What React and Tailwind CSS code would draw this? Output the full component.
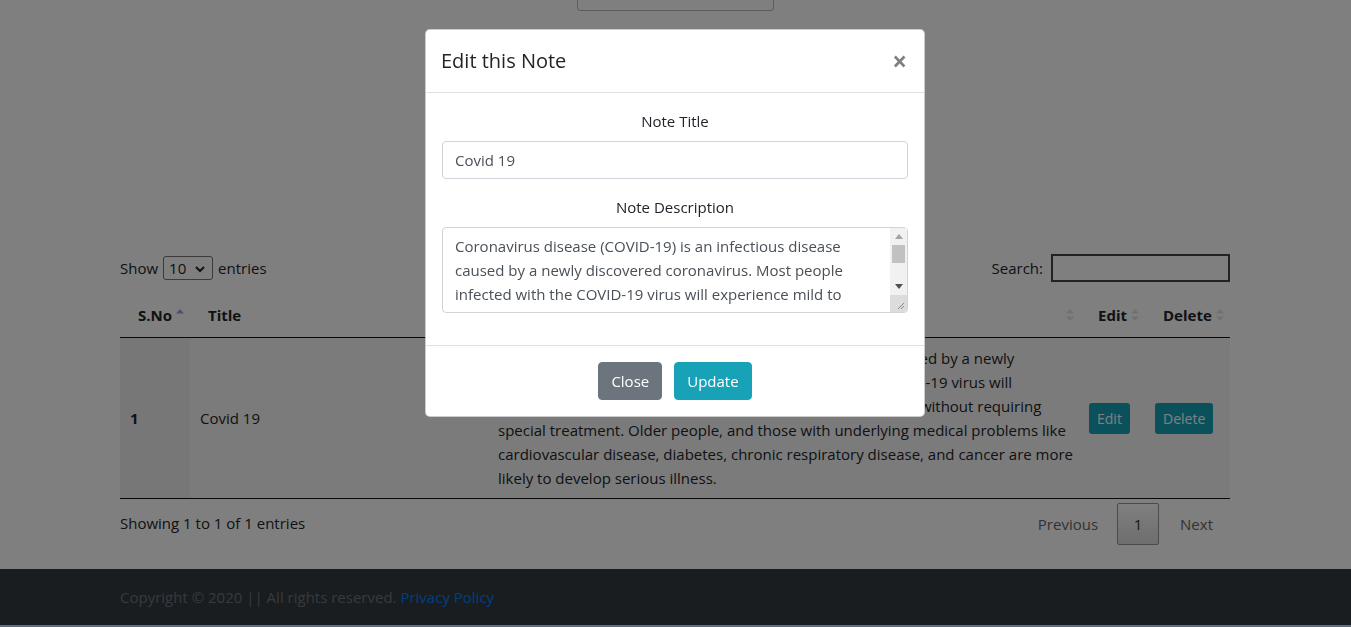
import React from "react";

const DESC_LINES = [
  "Coronavirus disease (COVID-19) is an infectious disease caused by a newly",
  "discovered coronavirus. Most people infected with the COVID-19 virus will",
  "experience mild to moderate respiratory illness and recover without requiring",
  "special treatment. Older people, and those with underlying medical problems like",
  "cardiovascular disease, diabetes, chronic respiratory disease, and cancer are more",
  "likely to develop serious illness.",
];

const DESC = DESC_LINES.join(" ");

function SortIcon({ asc }) {
  return (
    <svg width="8" height="14" viewBox="0 0 8 14" className="shrink-0">
      {asc ? (
        <path d="M0 5.5 L4 1 L8 5.5Z" fill="#9c9cec" />
      ) : (
        <path d="M0 5.5 L4 1 L8 5.5Z M0 8.5 L4 13 L8 8.5Z" fill="#e2e2e2" />
      )}
    </svg>
  );
}

function Th({ children, asc, className = "" }) {
  return (
    <th className={"py-[10px] pl-[18px] pr-[6px] text-left font-bold border-b border-[#111] " + className}>
      <div className="flex items-center justify-between">
        <span>{children}</span>
        <SortIcon asc={asc} />
      </div>
    </th>
  );
}

export default function App() {
  return (
    <div className="relative min-h-[627px] bg-white text-[#212529] font-['Open_Sans','Noto_Sans',sans-serif] text-[15px] leading-6 overflow-hidden">
      {/* top stub of a centered button */}
      <div className="flex justify-center pr-px">
        <div className="w-[197px] h-[11px] border-x border-b border-[#bcbcbc] rounded-b-[4px] bg-white" />
      </div>

      {/* data table */}
      <div className="flex justify-center pr-px mt-[243px]">
        <div className="w-[1110px]">
          <div className="flex items-center justify-between h-[28px]">
            <div className="flex items-center gap-[5px]">
              <span>Show</span>
              <div className="relative w-[50px] h-[24px] border border-[#767676] rounded-[3px] bg-white flex items-center pl-[5px]">
                <span>10</span>
                <svg width="10" height="7" viewBox="0 0 10 7" className="absolute right-[7px] top-[9px]">
                  <path d="M1 1 L5 5 L9 1" stroke="#222" strokeWidth="2" fill="none" />
                </svg>
              </div>
              <span>entries</span>
            </div>
            <div className="flex items-center gap-[8px]">
              <span>Search:</span>
              <div className="w-[179px] h-[28px] border-2 border-[#444] bg-white" />
            </div>
          </div>

          <table className="w-full table-fixed border-collapse mt-[11px]">
            <colgroup>
              <col className="w-[70px]" />
              <col className="w-[298px]" />
              <col className="w-[592px]" />
              <col className="w-[65px]" />
              <col className="w-[85px]" />
            </colgroup>
            <thead>
              <tr>
                <Th asc>S.No</Th>
                <Th>Title</Th>
                <Th>Description</Th>
                <Th>Edit</Th>
                <Th>Delete</Th>
              </tr>
            </thead>
            <tbody>
              <tr className="bg-[#f7f7f7] border-b border-[#111]">
                <td className="bg-[#eeeeee] px-[10px] py-[8px] font-bold align-middle">1</td>
                <td className="px-[10px] py-[8px] align-middle">Covid 19</td>
                <td className="px-[10px] py-[8px] align-middle">
                  {DESC_LINES.map((l, i) => (
                    <div key={i} className="whitespace-nowrap">{l}</div>
                  ))}
                </td>
                <td className="px-[9px] py-[8px] align-middle">
                  <button className="bg-[#17a2b8] text-white text-[14px] leading-[21px] px-[8px] py-[5px] rounded-[3px]">Edit</button>
                </td>
                <td className="px-[10px] py-[8px] align-middle">
                  <button className="bg-[#17a2b8] text-white text-[14px] leading-[21px] px-[8px] py-[5px] rounded-[3px]">Delete</button>
                </td>
              </tr>
            </tbody>
          </table>

          <div className="flex items-start justify-between mt-[4px]">
            <div className="pt-[8px]">Showing 1 to 1 of 1 entries</div>
            <div className="flex items-center">
              <span className="px-[16px] py-[8px] text-[#666] border border-transparent">Previous</span>
              <span className="ml-[2px] w-[42px] h-[42px] flex items-center justify-center border border-[#979797] rounded-[2px] bg-gradient-to-b from-white to-[#dcdcdc] text-[#333]">1</span>
              <span className="ml-[2px] pl-[18px] pr-[16px] py-[8px] text-[#666] border border-transparent">Next</span>
            </div>
          </div>
        </div>
      </div>

      <footer className="mt-[24px] bg-[#343a40] h-[56px] flex items-center justify-center pr-px">
        <div className="w-[1110px] text-[#6c757d]">
          Copyright © 2020 || All rights reserved. <span className="text-[#007bff]">Privacy Policy</span>
        </div>
      </footer>
      <div className="h-[2px] bg-[#bde0ff]" />

      {/* modal backdrop + dialog */}
      <div className="fixed inset-0 bg-black/50 flex justify-center items-start pt-[29px] pr-px">
        <div className="w-[500px] bg-white border border-black/20 rounded-[5px]">
          <div className="flex items-center justify-between px-[15px] py-[16px] border-b border-[#dee2e6]">
            <h5 className="text-[20px] leading-[30px] font-medium text-[#212529]">Edit this Note</h5>
            <span className="text-[26px] leading-none font-bold text-black/50 pr-[2px]">×</span>
          </div>
          <div className="p-[16px]">
            <div className="mb-[16px]">
              <div className="text-center mb-[8px] text-[#212529]">Note Title</div>
              <input
                readOnly
                value="Covid 19"
                className="block w-full h-[38px] px-[12px] py-[6px] border border-[#ced4da] rounded-[4px] text-[#495057] outline-none"
              />
            </div>
            <div className="mb-[16px]">
              <div className="text-center mb-[8px] text-[#212529]">Note Description</div>
              <div className="relative">
                <textarea
                  readOnly
                  rows={3}
                  value={DESC}
                  className="block w-full h-[86px] pl-[12px] pr-[29px] py-[6px] border border-[#ced4da] rounded-[4px] text-[#495057] outline-none resize-none overflow-hidden"
                />
                {/* fake scrollbar */}
                <div className="absolute right-[1px] top-[1px] bottom-[1px] w-[17px] flex flex-col">
                  <div className="flex-1 bg-[#f1f1f1] flex flex-col items-center">
                    <svg width="8" height="5" viewBox="0 0 8 5" className="mt-[6px]">
                      <path d="M0 5 L4 0 L8 5Z" fill="#a3a3a3" />
                    </svg>
                    <div className="mt-[6px] w-[13px] h-[18px] bg-[#c1c1c1]" />
                    <div className="flex-1" />
                    <svg width="8" height="5" viewBox="0 0 8 5" className="mb-[6px]">
                      <path d="M0 0 L4 5 L8 0Z" fill="#505050" />
                    </svg>
                  </div>
                  <div className="h-[17px] bg-[#dcdcdc] rounded-br-[3px]">
                    <svg width="17" height="17" viewBox="0 0 17 17">
                      <path d="M14 8 L8 14 M14 11 L11 14" stroke="#888" strokeWidth="1" />
                    </svg>
                  </div>
                </div>
              </div>
            </div>
          </div>
          <div className="flex items-center justify-center gap-[12px] border-t border-[#dee2e6] pt-[16px] pb-[16px]">
            <button className="bg-[#6c757d] border border-[#6c757d] text-white px-[12px] py-[6px] leading-[24px] rounded-[4px] text-[15px]">Close</button>
            <button className="bg-[#17a2b8] border border-[#17a2b8] text-white px-[12px] py-[6px] leading-[24px] rounded-[4px] text-[15px]">Update</button>
          </div>
        </div>
      </div>
    </div>
  );
}
